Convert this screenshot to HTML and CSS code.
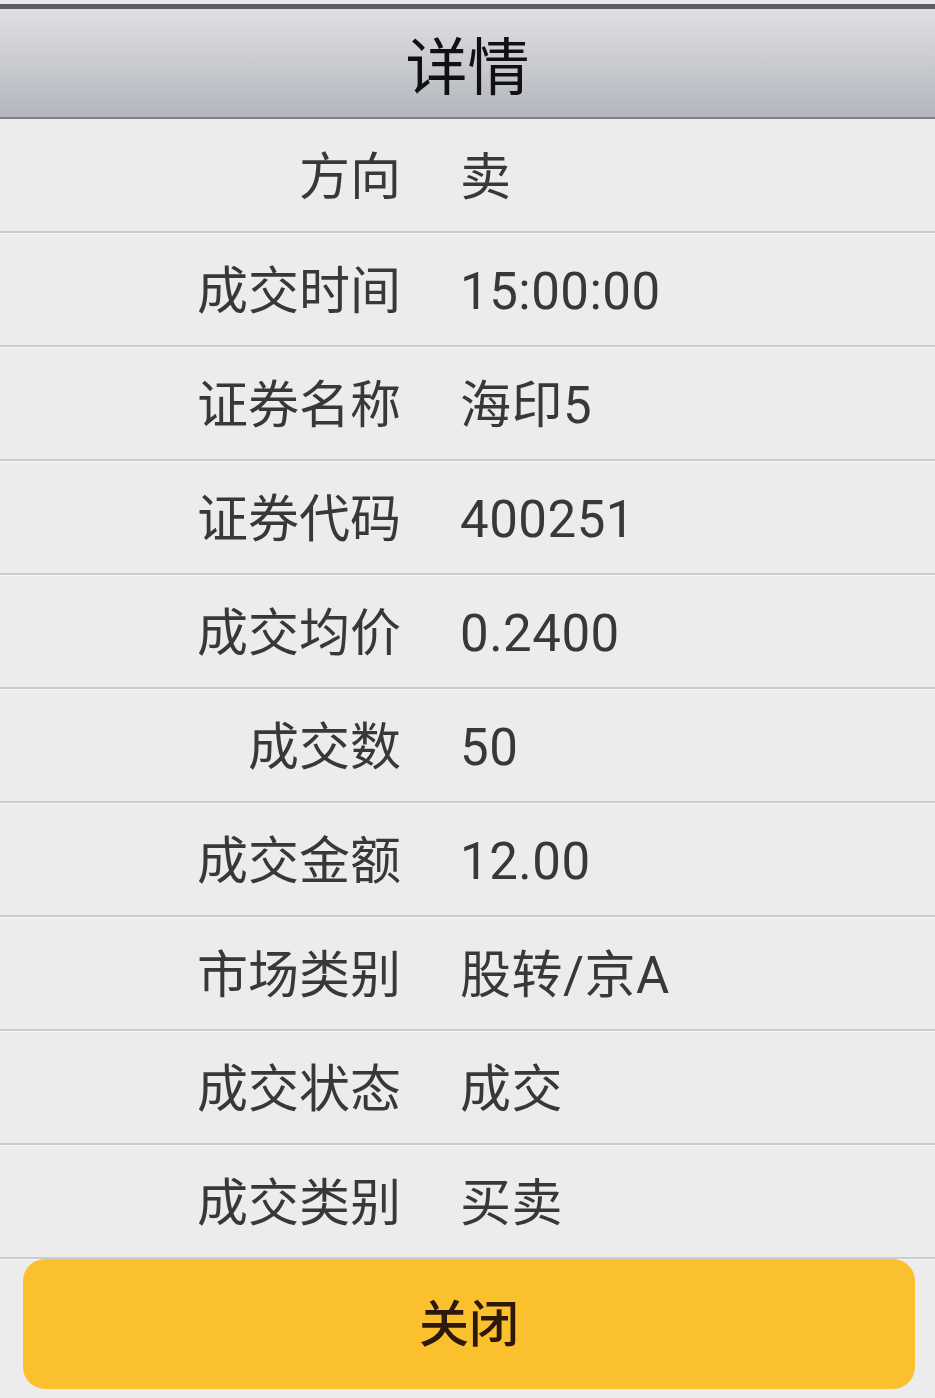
FILE: index.html
```html
<!DOCTYPE html>
<html lang="zh-CN">
<head>
    <meta charset="UTF-8">
    <meta name="viewport" content="width=device-width, initial-scale=1.0">
    <title>详情</title>
    <link rel="stylesheet" href="styles.css">
</head>
<body>
    <div class="top-edge"></div>
    <div class="header">详情</div>
    <div class="list">
        <div class="row"><span class="label">方向</span><span class="value">卖</span></div>
        <div class="row"><span class="label">成交时间</span><span class="value">15:00:00</span></div>
        <div class="row"><span class="label">证券名称</span><span class="value">海印5</span></div>
        <div class="row"><span class="label">证券代码</span><span class="value">400251</span></div>
        <div class="row"><span class="label">成交均价</span><span class="value">0.2400</span></div>
        <div class="row"><span class="label">成交数</span><span class="value">50</span></div>
        <div class="row"><span class="label">成交金额</span><span class="value">12.00</span></div>
        <div class="row"><span class="label">市场类别</span><span class="value">股转/京A</span></div>
        <div class="row"><span class="label">成交状态</span><span class="value">成交</span></div>
        <div class="row"><span class="label">成交类别</span><span class="value">买卖</span></div>
    </div>
    <div class="footer">
        <button class="close-btn">关闭</button>
    </div>
</body>
</html>
```

FILE: styles.css
```css
body {
    margin: 0;
    background: #ececec;
    font-family: "Noto Sans CJK SC", "Noto Sans", sans-serif;
    color: #383838;
}
.top-edge {
    height: 4px;
    background: #e9e9e9;
    border-bottom: 5px solid #5e5f62;
}
.header {
    height: 108px;
    display: flex;
    align-items: center;
    justify-content: center;
    background: linear-gradient(#dfe0e4, #b3b6bd);
    border-bottom: 2px solid #7c7e83;
    font-size: 62px;
    color: #111;
}
.row {
    height: 108px;
    padding-bottom: 4px;
    display: grid;
    grid-template-columns: 401px 1fr;
    column-gap: 59px;
    align-content: center;
    align-items: baseline;
    border-bottom: 2px solid #c9ccd3;
    box-shadow: 0 1px 0 #f8f8f8;
    font-size: 51px;
}
.label {
    text-align: right;
}
.value {
    font-family: Roboto, "Noto Sans CJK SC", sans-serif;
    letter-spacing: 0.5px;
}
.footer {
    padding: 0 20px 9px 23px;
}
.close-btn {
    display: block;
    width: 100%;
    height: 130px;
    padding: 0 0 8px;
    border: none;
    border-radius: 22px;
    background: #fbc02d;
    color: #2e170b;
    font-family: inherit;
    font-size: 50px;
    font-weight: 500;
}
```
